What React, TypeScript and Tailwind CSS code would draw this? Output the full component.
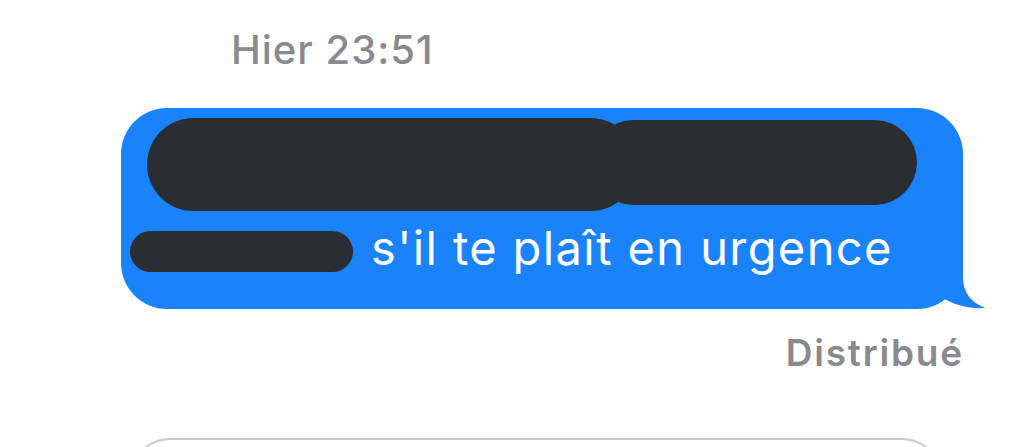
import React from "react";

const font = { fontFamily: "Inter, 'Liberation Sans', sans-serif" };

function Tail() {
  return (
    <svg
      className="absolute right-[-23px] bottom-0"
      width="90"
      height="62"
      viewBox="0 0 90 62"
      fill="#1a83fc"
    >
      <path d="M67 0 L67 30 C67 46 75 55 89 61 C74 62 56 58 44 49 C35 56 22 62 0 62 L0 0 Z" />
    </svg>
  );
}

function Redacted({ className }: { className: string }) {
  return <div className={"shrink-0 rounded-full bg-[#2a2d31] " + className} />;
}

export default function App() {
  return (
    <div className="flex h-[447px] w-[1024px] flex-col overflow-hidden bg-white" style={font}>
      <div className="pl-[231px] pt-[30px] text-[40px] leading-none font-medium tracking-[1px] text-[#8a8a8e]">
        Hier 23:51
      </div>

      <div className="relative ml-[121px] mt-[38px] flex h-[201px] w-[842px] shrink-0 flex-col rounded-[46px] bg-[#1a83fc] pt-[10px]">
        <Tail />
        <div className="relative flex items-start pl-[26px]">
          <Redacted className="h-[93px] w-[490px]" />
          <Redacted className="-ml-[46px] mt-[2px] h-[85px] w-[326px]" />
        </div>
        <div className="mt-[13px] flex items-center gap-[18px] pl-[9px]">
          <Redacted className="h-[41px] w-[223px]" />
          <span className="pb-[8px] text-[47px] leading-none tracking-[1.4px] text-white">
            s'il te plaît en urgence
          </span>
        </div>
      </div>

      <div className="pr-[60px] pt-[25px] text-right text-[37px] leading-none font-semibold tracking-[1.8px] text-[#8a8a8e]">
        Distribué
      </div>

      <div className="ml-[130px] mt-[67px] h-[80px] w-[812px] shrink-0 rounded-[40px] border-2 border-[#c9c9cd]" />
    </div>
  );
}
